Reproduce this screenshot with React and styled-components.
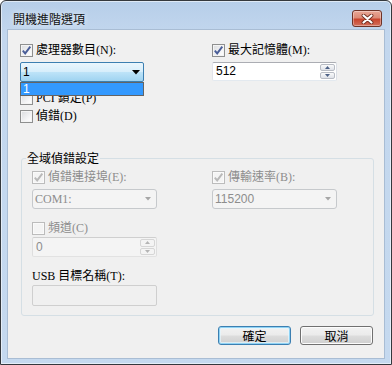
import styled, { createGlobalStyle } from "styled-components";

const SERIF = `"Liberation Serif", "Noto Sans CJK TC", serif`;
const SANS = `"Liberation Sans", "Noto Sans CJK TC", sans-serif`;
const CJK = `"Noto Sans CJK TC", sans-serif`;

const GlobalStyle = createGlobalStyle`
  html, body {
    margin: 0;
    padding: 0;
    background: #ffffff;
  }
  * {
    box-sizing: border-box;
  }
`;

const Window = styled.div`
  width: 392px;
  height: 365px;
  display: flex;
  flex-direction: column;
  padding: 0 6px 5px 6px;
  border: 1px solid #34383d;
  border-radius: 6px 6px 0 0;
  background: linear-gradient(#b6cee9, #c3d7ee 34px, #c5d9ef);
  box-shadow: inset 0 0 0 1px rgba(255, 255, 255, 0.55);
  font-family: ${SERIF};
  font-size: 12px;
  color: #000;
`;

const TitleBar = styled.div`
  height: 28px;
  display: flex;
  align-items: flex-start;
  justify-content: space-between;
  padding: 9px 3px 0 6px;
`;

const Title = styled.div`
  font-family: ${CJK};
  font-size: 12px;
  line-height: 17px;
  color: #111;
  text-shadow: 0 0 6px rgba(255, 255, 255, 0.9);
`;

const CloseButton = styled.div`
  width: 30px;
  height: 17px;
  display: grid;
  place-items: center;
  border: 1px solid #6e3327;
  border-radius: 3px;
  background: linear-gradient(#e9a796, #dc8b77 45%, #c9452d 55%, #d2705c);
  box-shadow: inset 0 0 0 1px rgba(255, 255, 255, 0.35);
`;

const Client = styled.div`
  flex: 1;
  display: flex;
  flex-direction: column;
  padding: 14px 10px 0 12px;
  background: #f0f0f0;
  border: 1px solid #a9bdd4;
`;

const Columns = styled.div`
  display: grid;
  grid-template-columns: ${(p) => p.$left}px 125px;
  padding-left: ${(p) => p.$pad ?? 0}px;
`;

const Column = styled.div`
  display: flex;
  flex-direction: column;
  align-items: flex-start;
`;

const CheckRow = styled.div`
  display: flex;
  align-items: center;
  gap: 3px;
  height: 13px;
  margin-top: ${(p) => p.$mt ?? 0}px;
  line-height: 13px;
  white-space: nowrap;
  color: ${(p) => (p.$disabled ? "#8d8d8d" : "#000")};
`;

const Box = styled.span`
  width: 13px;
  height: 13px;
  display: grid;
  place-items: center;
  border: 1px solid ${(p) => (p.$disabled ? "#bcbcbc" : "#8e8f8f")};
  background: ${(p) =>
    p.$disabled
      ? "#f4f4f4"
      : "linear-gradient(135deg, #d9dbde, #f7f7f8 70%, #ffffff)"};
  box-shadow: inset 0 0 0 1px ${(p) => (p.$disabled ? "#fafafa" : "#f4f4f4")};
`;

const Combo = styled.div`
  position: relative;
  width: ${(p) => p.$w}px;
  height: 20px;
  margin-top: ${(p) => p.$mt ?? 0}px;
  display: flex;
  align-items: center;
  justify-content: space-between;
  padding: 0 ${(p) => (p.$open ? 3 : 5)}px 0 2px;
  border: 1px solid ${(p) => (p.$open ? "#3c7fb1" : "#c6c9cc")};
  border-radius: ${(p) => (p.$open ? 2 : 3)}px;
  background: ${(p) =>
    p.$open
      ? "linear-gradient(#eaf6fd, #d7eefb 48%, #bde3f8 52%, #9fd3f1)"
      : "#f4f4f4"};
  color: ${(p) => (p.$open ? "#000" : "#8d8d8d")};
  font-family: ${(p) => (p.$serif ? SERIF : SANS)};
  line-height: 13px;
`;

const DropList = styled.div`
  position: absolute;
  top: calc(100% + 1px);
  left: -1px;
  right: -1px;
  height: 14px;
  padding: 0;
  border: 1px solid #646464;
  background: #ffffff;
  z-index: 2;
`;

const DropItem = styled.div`
  height: 12px;
  padding-left: 2px;
  background: #3399ff;
  color: #ffffff;
  font-family: ${SANS};
  line-height: 12px;
`;

const Spin = styled.div`
  width: 125px;
  height: ${(p) => p.$h}px;
  margin-top: ${(p) => p.$mt ?? 0}px;
  display: flex;
  align-items: stretch;
  padding: 1px 1px 1px 3px;
  border: 1px solid ${(p) => (p.$disabled ? "#d3d3d3" : "#abadb3")};
  border-color: ${(p) =>
    p.$disabled ? "#cfcfcf #dedede #e2e2e2 #dedede" : "#abadb3 #dbdfe6 #e3e9ef #e2e3ea"};
  border-radius: 2px;
  background: ${(p) => (p.$disabled ? "#f4f4f4" : "#ffffff")};
  color: ${(p) => (p.$disabled ? "#8d8d8d" : "#000")};
  font-family: ${SANS};
`;

const SpinText = styled.div`
  flex: 1;
  display: flex;
  align-items: center;
  line-height: 13px;
`;

const SpinButtons = styled.div`
  width: 15px;
  display: flex;
  flex-direction: column;
  gap: 1px;
`;

const SpinButton = styled.div`
  flex: 1;
  display: grid;
  place-items: center;
  border: 1px solid ${(p) => (p.$disabled ? "#d6d6d6" : "#b8bcc4")};
  border-radius: 2px;
  background: ${(p) =>
    p.$disabled ? "#f4f4f4" : "linear-gradient(#fbfbfb, #eceef2 50%, #e0e3e9)"};
`;

const TextBox = styled.div`
  width: 125px;
  height: 21px;
  margin-top: ${(p) => p.$mt ?? 0}px;
  border: 1px solid #cfcfcf;
  border-radius: 2px;
  background: #f0f0f0;
`;

const FieldLabel = styled.div`
  margin-top: ${(p) => p.$mt ?? 0}px;
  line-height: 13px;
  white-space: nowrap;
`;

const Group = styled.fieldset`
  margin: 29px 0 0 1px;
  padding: 7px 0 9px 0;
  min-width: 0;
  border: 1px solid #d5dfe5;
  border-radius: 3px;
`;

const Legend = styled.legend`
  margin-left: 4px;
  padding: 0 1px;
  font-family: ${CJK};
  font-size: 12px;
  line-height: 12px;
`;

const ButtonRow = styled.div`
  display: flex;
  justify-content: flex-end;
  gap: 9px;
  margin-top: 10px;
  padding-right: 1px;
`;

const Button = styled.div`
  width: 73px;
  height: 19px;
  display: grid;
  place-items: center;
  border: 1px solid ${(p) => (p.$default ? "#3c7fb1" : "#707070")};
  border-radius: 3px;
  background: linear-gradient(#f2f2f2, #ebebeb 48%, #dddddd 52%, #cfcfcf);
  box-shadow: ${(p) =>
    p.$default
      ? "inset 0 0 0 1px #8fd3f5, inset 0 0 0 2px rgba(230, 246, 253, 0.7)"
      : "inset 0 0 0 1px #fcfcfc"};
  font-family: ${CJK};
  font-size: 12px;
  line-height: 13px;
`;

function CloseIcon() {
  return (
    <svg width="13" height="10" viewBox="0 0 13 10">
      <path d="M2.5 1.5 L10.5 8.5 M10.5 1.5 L2.5 8.5" stroke="#6b2a1e" strokeWidth="3.8" strokeLinecap="round" />
      <path d="M2.5 1.5 L10.5 8.5 M10.5 1.5 L2.5 8.5" stroke="#ffffff" strokeWidth="2.2" strokeLinecap="round" />
    </svg>
  );
}

function CheckBox({ checked, disabled, label, mt }) {
  return (
    <CheckRow $disabled={disabled} $mt={mt}>
      <Box $disabled={disabled}>
        {checked && (
          <svg width="11" height="11" viewBox="0 0 11 11">
            <path
              d="M1.8 5.6 L4.2 8.4 L9.3 1.6"
              fill="none"
              stroke={disabled ? "#b9b9b9" : "#4a5e98"}
              strokeWidth="1.9"
            />
          </svg>
        )}
      </Box>
      <span>{label}</span>
    </CheckRow>
  );
}

function DownArrow({ disabled }) {
  return disabled ? (
    <svg width="6" height="4" viewBox="0 0 6 4">
      <path d="M0 0 H6 L3 3.5 Z" fill="#a6a6a6" />
    </svg>
  ) : (
    <svg width="8" height="5" viewBox="0 0 8 5">
      <path d="M0 0 H8 L4 4.5 Z" fill="#000" />
    </svg>
  );
}

function SpinArrow({ up, disabled }) {
  const fill = disabled ? "#b4b4b4" : "#4d6185";
  return (
    <svg width="5" height="3" viewBox="0 0 5 3">
      <path d={up ? "M0 3 H5 L2.5 0 Z" : "M0 0 H5 L2.5 3 Z"} fill={fill} />
    </svg>
  );
}

function SpinBox({ value, disabled, h, mt }) {
  return (
    <Spin $disabled={disabled} $h={h} $mt={mt}>
      <SpinText>{value}</SpinText>
      <SpinButtons>
        <SpinButton $disabled={disabled}>
          <SpinArrow up disabled={disabled} />
        </SpinButton>
        <SpinButton $disabled={disabled}>
          <SpinArrow disabled={disabled} />
        </SpinButton>
      </SpinButtons>
    </Spin>
  );
}

export default function App() {
  return (
    <>
      <GlobalStyle />
      <Window>
        <TitleBar>
          <Title>開機進階選項</Title>
          <CloseButton>
            <CloseIcon />
          </CloseButton>
        </TitleBar>
        <Client>
          <Columns $left={192}>
            <Column>
              <CheckBox checked label="處理器數目(N):" />
              <Combo $open $w={124} $mt={5}>
                <span style={{ fontFamily: SANS }}>1</span>
                <DownArrow />
                <DropList>
                  <DropItem>1</DropItem>
                </DropList>
              </Combo>
              <CheckBox label="PCI 鎖定(P)" mt={10} />
              <CheckBox label="偵錯(D)" mt={5} />
            </Column>
            <Column>
              <CheckBox checked label="最大記憶體(M):" />
              <SpinBox value="512" h={19} mt={5} />
            </Column>
          </Columns>

          <Group>
            <Legend>全域偵錯設定</Legend>
            <Columns $left={180} $pad={10}>
              <Column>
                <CheckBox checked disabled label="偵錯連接埠(E):" />
                <Combo $w={125} $mt={5} $serif>
                  <span>COM1:</span>
                  <DownArrow disabled />
                </Combo>
                <CheckBox disabled label="頻道(C)" mt={13} />
                <SpinBox value="0" disabled h={20} mt={2} />
                <FieldLabel $mt={13}>USB 目標名稱(T):</FieldLabel>
                <TextBox $mt={2} />
              </Column>
              <Column>
                <CheckBox checked disabled label="傳輸速率(B):" />
                <Combo $w={125} $mt={5}>
                  <span>115200</span>
                  <DownArrow disabled />
                </Combo>
              </Column>
            </Columns>
          </Group>

          <ButtonRow>
            <Button $default>確定</Button>
            <Button>取消</Button>
          </ButtonRow>
        </Client>
      </Window>
    </>
  );
}
